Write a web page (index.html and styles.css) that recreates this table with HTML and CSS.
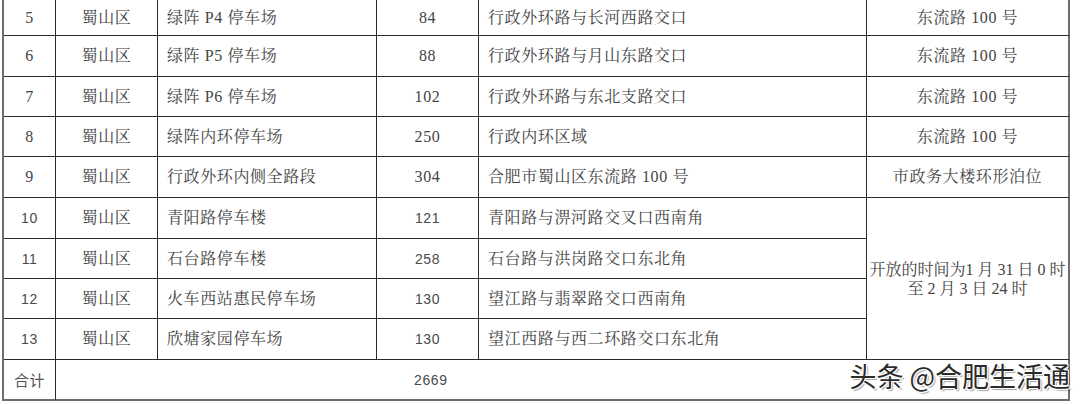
FILE: index.html
```html
<!DOCTYPE html>
<html lang="zh-CN">
<head>
<meta charset="utf-8">
<title>停车场</title>
<link rel="stylesheet" href="styles.css">
</head>
<body>
<div class="sheet">
  <table class="grid">
    <colgroup>
      <col class="c-no"><col class="c-dist"><col class="c-name"><col class="c-num"><col class="c-addr"><col class="c-note">
    </colgroup>
    <tbody>
      <tr class="r-first">
        <td class="ctr">5</td><td class="ctr">蜀山区</td><td class="lft">绿阵 P4 停车场</td><td class="ctr">84</td><td class="lft">行政外环路与长河西路交口</td><td class="ctr last">东流路 100 号</td>
      </tr>
      <tr class="r-tall">
        <td class="ctr">6</td><td class="ctr">蜀山区</td><td class="lft">绿阵 P5 停车场</td><td class="ctr">88</td><td class="lft">行政外环路与月山东路交口</td><td class="ctr last">东流路 100 号</td>
      </tr>
      <tr>
        <td class="ctr">7</td><td class="ctr">蜀山区</td><td class="lft">绿阵 P6 停车场</td><td class="ctr">102</td><td class="lft">行政外环路与东北支路交口</td><td class="ctr last">东流路 100 号</td>
      </tr>
      <tr>
        <td class="ctr">8</td><td class="ctr">蜀山区</td><td class="lft">绿阵内环停车场</td><td class="ctr">250</td><td class="lft">行政内环区域</td><td class="ctr last">东流路 100 号</td>
      </tr>
      <tr class="r-tall">
        <td class="ctr">9</td><td class="ctr">蜀山区</td><td class="lft">行政外环内侧全路段</td><td class="ctr">304</td><td class="lft">合肥市蜀山区东流路 100 号</td><td class="ctr last">市政务大楼环形泊位</td>
      </tr>
      <tr class="r-tall">
        <td class="ctr num2">10</td><td class="ctr">蜀山区</td><td class="lft">青阳路停车楼</td><td class="ctr num2">121</td><td class="lft">青阳路与淠河路交叉口西南角</td>
        <td class="ctr last open" rowspan="4">开放的时间为1 月 31 日 0 时<br>至 2 月 3 日 24 时</td>
      </tr>
      <tr>
        <td class="ctr num2">11</td><td class="ctr">蜀山区</td><td class="lft">石台路停车楼</td><td class="ctr num2">258</td><td class="lft">石台路与洪岗路交口东北角</td>
      </tr>
      <tr>
        <td class="ctr num2">12</td><td class="ctr">蜀山区</td><td class="lft">火车西站惠民停车场</td><td class="ctr num2">130</td><td class="lft">望江路与翡翠路交口西南角</td>
      </tr>
      <tr class="r-tall">
        <td class="ctr num2">13</td><td class="ctr">蜀山区</td><td class="lft">欣塘家园停车场</td><td class="ctr num2">130</td><td class="lft">望江西路与西二环路交口东北角</td>
      </tr>
      <tr class="r-total">
        <td class="ctr sum-label">合计</td><td class="merged"></td><td class="merged open-left"></td><td class="ctr num2 open-left">2669</td><td class="open-left"></td><td class="last open-left"></td>
      </tr>
    </tbody>
  </table>
  <div class="watermark">头条 @合肥生活通</div>
</div>
</body>
</html>
```

FILE: styles.css
```css
html, body {
  margin: 0;
  padding: 0;
  background: #ffffff;
}

.sheet {
  position: relative;
  width: 1080px;
  height: 404px;
  overflow: hidden;
  padding-left: 2px;
  box-sizing: border-box;
}

.grid {
  table-layout: fixed;
  border-collapse: separate;
  border-spacing: 0;
  width: 1068px;
  border-left: 2px solid #6e6e6e;
  font-family: "Liberation Serif", "Noto Serif CJK SC", "AR PL UMing CN", "Noto Sans CJK SC", serif;
  font-size: 16px;
  color: #444444;
}

.c-no { width: 52px; }
.c-dist { width: 102px; }
.c-name { width: 219px; }
.c-num { width: 102px; }
.c-addr { width: 388px; }
.c-note { width: 203px; }

.grid td {
  box-sizing: border-box;
  border-right: 1px solid #2a2a2a;
  border-bottom: 1px solid #2a2a2a;
  padding: 0;
  vertical-align: middle;
  white-space: nowrap;
  letter-spacing: 0.6px;
  line-height: 20px;
}

.grid tr { height: 40px; }
.grid tr.r-first { height: 36px; }
.grid tr.r-tall { height: 41px; }
.grid tr.r-total { height: 41px; }

.ctr { text-align: center; }
.lft { text-align: left; padding-left: 9px !important; }

.grid td.last {
  border-right: 2px solid #6e6e6e;
}

.num2 {
  font-family: "Liberation Sans", "Noto Sans CJK SC", sans-serif;
  font-size: 14px;
  letter-spacing: 0.3px;
  color: #4a4a4a;
}

.open {
  letter-spacing: 0 !important;
  font-size: 16px;
  line-height: 19px !important;
}

.r-total td {
  border-bottom: 2px solid #6e6e6e;
}
.grid .r-total td.open-left {
  border-left: none;
}
.grid .r-total td.merged,
.grid .r-total td.open-left {
  border-right: none;
}
.grid .r-total td.last {
  border-right: 2px solid #6e6e6e;
}
.r-total .num2 {
  text-align: left;
  padding-left: 37px;
}
.sum-label {
  font-family: "Noto Sans CJK SC", sans-serif;
  font-size: 15px;
  letter-spacing: 0;
  color: #555555;
}

.watermark {
  position: absolute;
  right: 10px;
  top: 357px;
  font-family: "Noto Sans CJK SC", sans-serif;
  font-size: 27px;
  font-weight: 400;
  color: #2b2b2b;
  letter-spacing: 0;
  line-height: 38px;
  text-shadow: 1px 1px 0 #ffffff, -1px -1px 0 #ffffff, 1px -1px 0 #ffffff, -1px 1px 0 #ffffff, 2px 2px 1px rgba(0,0,0,0.35);
}
```
